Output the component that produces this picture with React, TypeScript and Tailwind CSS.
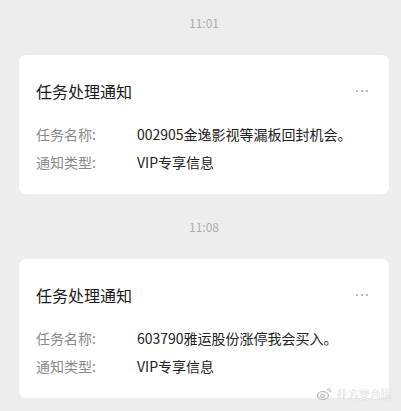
import React from "react";

const font = { fontFamily: '"Noto Sans CJK SC", "Noto Sans", sans-serif' };

function Card({ name }: { name: string }) {
  return (
    <div className="bg-white rounded-[7px] pt-[24px] pb-[18px] pl-[17px] pr-[21px]">
      <div className="flex items-center justify-between h-[24px]">
        <div className="text-[16px] leading-[24px] text-[#1b1b1b]">任务处理通知</div>
        <div className="flex gap-[3px] items-center">
          <span className="w-[2px] h-[2px] rounded-full bg-[#a0a0a0]" />
          <span className="w-[2px] h-[2px] rounded-full bg-[#a0a0a0]" />
          <span className="w-[2px] h-[2px] rounded-full bg-[#a0a0a0]" />
        </div>
      </div>
      <div className="mt-[17px] text-[14px] leading-[28px]">
        <div className="flex">
          <div className="w-[101px] shrink-0 text-[#8a8a8a]">任务名称:</div>
          <div className="text-[#222222]">{name}</div>
        </div>
        <div className="flex">
          <div className="w-[101px] shrink-0 text-[#8a8a8a]">通知类型:</div>
          <div className="text-[#222222]">VIP专享信息</div>
        </div>
      </div>
    </div>
  );
}

export default function App() {
  return (
    <div className="w-[401px] h-[411px] bg-[#ededed] overflow-hidden relative" style={font}>
      <div className="ml-[19px] w-[370px] pt-[13px]">
        <div className="text-center text-[12px] leading-[20px] text-[#adadad] mb-[22px]">11:01</div>
        <Card name="002905金逸影视等漏板回封机会。" />
        <div className="text-center text-[12px] leading-[20px] text-[#adadad] mt-[23px] mb-[22px]">11:08</div>
        <Card name="603790雅运股份涨停我会买入。" />
      </div>
      <div className="absolute right-[9px] bottom-[10px] flex items-center gap-[5px]">
        <svg width="15" height="12" viewBox="0 0 15 12">
          <ellipse cx="6" cy="7.5" rx="5.5" ry="4" fill="#f4f4f4" stroke="#b8b8b8" strokeWidth="1.2" />
          <ellipse cx="5.5" cy="8" rx="2" ry="1.5" fill="none" stroke="#b8b8b8" strokeWidth="1" />
          <path d="M10 1.5 a3 3 0 0 1 3 3" fill="none" stroke="#b8b8b8" strokeWidth="1" />
          <path d="M10.5 0 a4.5 4.5 0 0 1 4 4" fill="none" stroke="#b8b8b8" strokeWidth="0.8" />
        </svg>
        <span className="text-[11px] leading-[14px] text-white [text-shadow:0_0_1px_#9a9a9a]">什方变台历</span>
      </div>
    </div>
  );
}
